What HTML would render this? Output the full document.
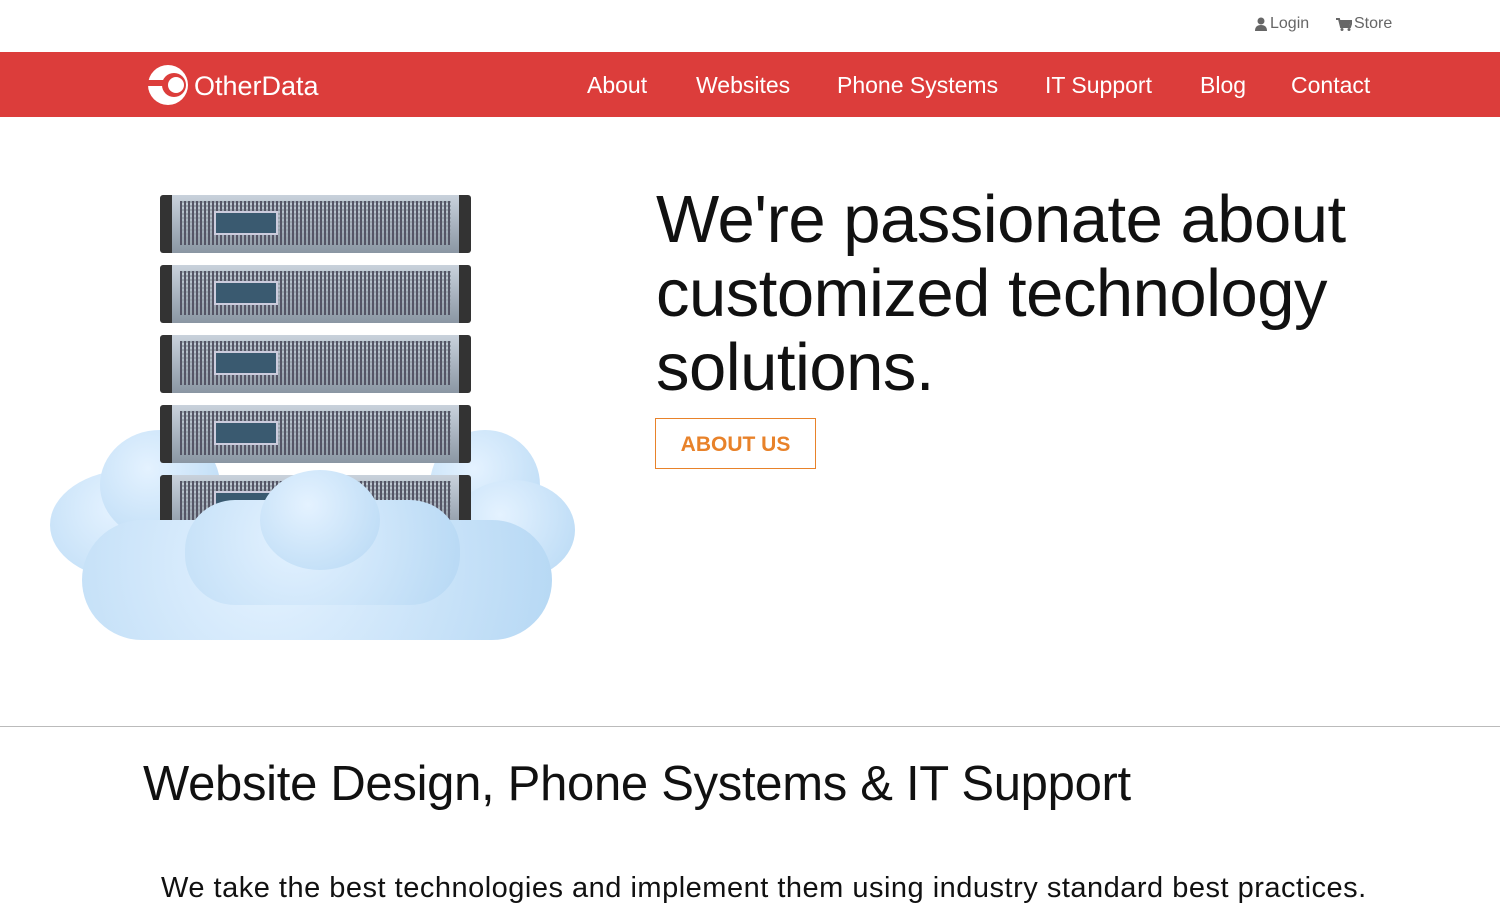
<!DOCTYPE html>
<html><head><style>
*{margin:0;padding:0;box-sizing:border-box}
body{width:1500px;height:913px;overflow:hidden;background:#fff;font-family:"Liberation Sans",sans-serif;position:relative}
.top{position:absolute;top:15px;font-size:16px;color:#666}
.nav{position:absolute;top:52px;left:0;width:1500px;height:65px;background:#dc3d3b}
.nav a{position:absolute;top:20px;color:#fff;font-size:23px;text-decoration:none}
.h1{position:absolute;left:656px;top:183px;font-size:67px;line-height:74px;color:#111;letter-spacing:-0.5px}
.btn{position:absolute;left:655px;top:418px;width:161px;height:51px;border:1.5px solid #e8822a;color:#e8822a;font-size:21px;font-weight:bold;text-align:center;line-height:51px}
.hr{position:absolute;left:0;top:726px;width:1500px;height:1px;background:#bbb}
.h2{position:absolute;left:143px;top:756px;font-size:49px;color:#111;letter-spacing:-0.3px}
.p{position:absolute;left:161px;top:872px;font-size:29px;color:#111;letter-spacing:0.5px}
.unit{position:absolute;left:160px;width:311px;height:58px;background:linear-gradient(#c9d2dc,#8a96a3);border-radius:3px;border-left:12px solid #333;border-right:12px solid #333}
.unit:before{content:"";position:absolute;left:8px;right:8px;top:6px;bottom:8px;background:repeating-linear-gradient(90deg,#556 0 2px,transparent 2px 4px),repeating-linear-gradient(#99a3ad 0 2px,transparent 2px 4px)}
.unit:after{content:"";position:absolute;left:42px;top:16px;width:60px;height:20px;background:#3a5a70;border:2px solid #ccd}
.cl{position:absolute;border-radius:50%;background:radial-gradient(circle at 40% 35%,#e4f2ff,#b6d8f4)}
</style></head><body>
<svg style="position:absolute;left:1255px;top:17px" width="12" height="14" viewBox="0 0 12 14"><circle cx="6" cy="4" r="3.5" fill="#666"/><path d="M0 14 Q0 8 6 8 Q12 8 12 14Z" fill="#666"/></svg>
<div class="top" style="left:1270px">Login</div>
<svg style="position:absolute;left:1336px;top:18px" width="16" height="13" viewBox="0 0 16 13"><path d="M0 1h3l2 8h9l2-6H4" fill="none" stroke="#666" stroke-width="2"/><path d="M4 3h11l-2 6H5z" fill="#666"/><circle cx="6" cy="11.5" r="1.5" fill="#666"/><circle cx="13" cy="11.5" r="1.5" fill="#666"/></svg>
<div class="top" style="left:1354px">Store</div>
<div class="nav">
<svg style="position:absolute;left:148px;top:13px" width="42" height="42" viewBox="0 0 42 42"><circle cx="20" cy="20" r="20" fill="#fff"/><rect x="0" y="15" width="24" height="6" fill="#dc3d3b"/><circle cx="26" cy="20" r="12" fill="#dc3d3b"/><circle cx="28" cy="20" r="8" fill="#fff"/></svg>
<div style="position:absolute;left:194px;top:19px;color:#fff;font-size:27px">OtherData</div>
<a style="left:587px">About</a><a style="left:696px">Websites</a><a style="left:837px">Phone Systems</a><a style="left:1045px">IT Support</a><a style="left:1200px">Blog</a><a style="left:1291px">Contact</a>
</div>
<div class="cl" style="left:50px;top:470px;width:160px;height:110px"></div>
<div class="cl" style="left:100px;top:430px;width:120px;height:110px"></div>
<div class="cl" style="left:430px;top:430px;width:110px;height:110px"></div>
<div class="cl" style="left:450px;top:480px;width:125px;height:100px"></div>
<div class="unit" style="top:195px"></div>
<div class="unit" style="top:265px"></div>
<div class="unit" style="top:335px"></div>
<div class="unit" style="top:405px"></div>
<div class="unit" style="top:475px"></div>
<div class="cl" style="left:82px;top:520px;width:470px;height:120px;border-radius:60px"></div>
<div class="cl" style="left:185px;top:500px;width:275px;height:105px;border-radius:50px"></div>
<div class="cl" style="left:260px;top:470px;width:120px;height:100px"></div>
<div class="h1">We're passionate about<br>customized technology<br>solutions.</div>
<div class="btn">ABOUT US</div>
<div class="hr"></div>
<div class="h2">Website Design, Phone Systems &amp; IT Support</div>
<div class="p">We take the best technologies and implement them using industry standard best practices.</div>
</body></html>
